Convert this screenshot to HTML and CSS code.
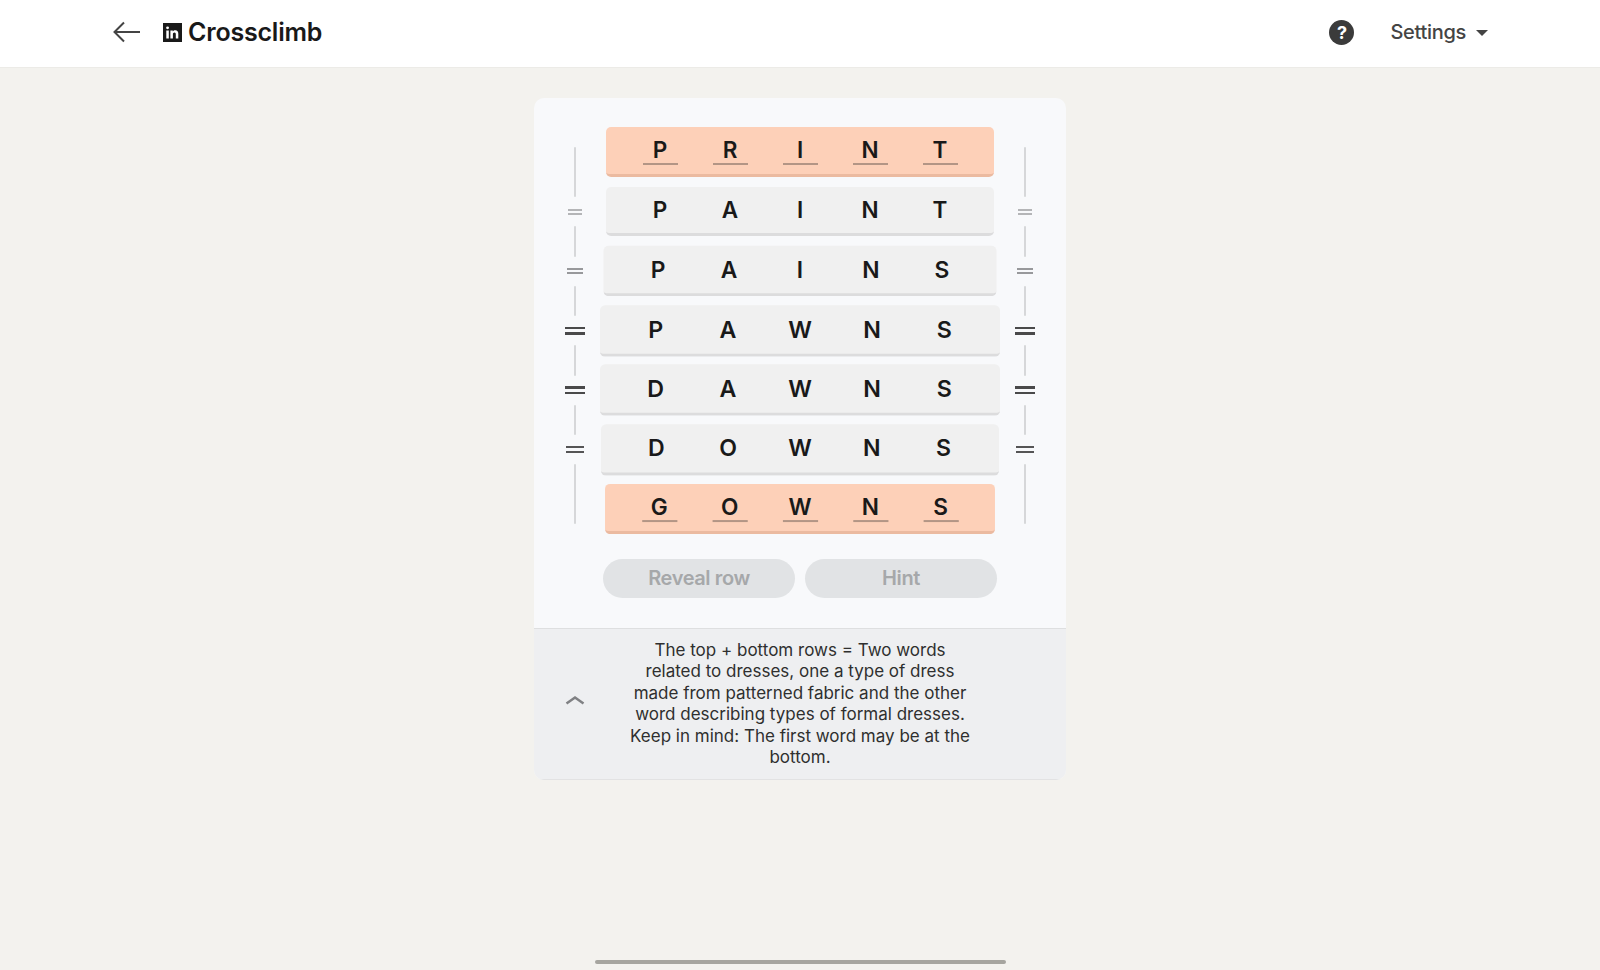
FILE: index.html
```html
<!DOCTYPE HTML>
<html>

<head>
    <title>Crossclimb</title>
    <meta name="viewport" content="width=device-width, initial-scale=1">
    <link rel="stylesheet" href="styles.css">
</head>

<body>
    <header class="topbar">
        <div class="topbar-left">
            <svg class="back-icon" viewBox="0 0 28 24" width="28" height="24" aria-hidden="true">
                <path d="M27 12H2M11 2.500L1.500 12l9.500 9.500" />
            </svg>
            <svg class="logo" viewBox="0 0 19 19" width="19" height="19" aria-hidden="true">
                <rect width="19" height="19" fill="#191919" />
                <path fill="#fff" d="M3.300 7.400h2.500V15.500H3.300zM4.550 3.400a1.450 1.450 0 1 1 0 2.900a1.450 1.450 0 0 1 0-2.900zM7.400 7.400h2.400v1.100c.5-.8 1.300-1.300 2.500-1.300 2.100 0 3 1.300 3 3.500v4.800h-2.500v-4.300c0-1.100-.4-1.800-1.300-1.800-1 0-1.600.7-1.600 1.900v4.200H7.400z" />
            </svg>
            <h1 class="title">Crossclimb</h1>
        </div>
        <div class="topbar-right">
            <span class="help">?</span>
            <span class="settings">Settings</span>
            <span class="caret"></span>
        </div>
    </header>

    <main class="card">
        <section class="game">
            <div class="puzzle">
                <div class="rail">
                    <div class="line line-first"></div>
                    <div class="eq eq-faint"><i></i><i></i></div>
                    <div class="line"></div>
                    <div class="eq eq-mid"><i></i><i></i></div>
                    <div class="line"></div>
                    <div class="eq eq-strong"><i></i><i></i></div>
                    <div class="line"></div>
                    <div class="eq eq-strong"><i></i><i></i></div>
                    <div class="line"></div>
                    <div class="eq eq-dark"><i></i><i></i></div>
                    <div class="line line-last"></div>
                </div>

                <div class="board">
                    <div class="row row-end">
                        <span class="cell"><b>P</b></span><span class="cell"><b>R</b></span><span class="cell"><b>I</b></span><span class="cell"><b>N</b></span><span class="cell"><b>T</b></span>
                    </div>
                    <div class="row">
                        <span class="cell">P</span><span class="cell">A</span><span class="cell">I</span><span class="cell">N</span><span class="cell">T</span>
                    </div>
                    <div class="row lift-1">
                        <span class="cell">P</span><span class="cell">A</span><span class="cell">I</span><span class="cell">N</span><span class="cell">S</span>
                    </div>
                    <div class="row lift-3">
                        <span class="cell">P</span><span class="cell">A</span><span class="cell">W</span><span class="cell">N</span><span class="cell">S</span>
                    </div>
                    <div class="row lift-3">
                        <span class="cell">D</span><span class="cell">A</span><span class="cell">W</span><span class="cell">N</span><span class="cell">S</span>
                    </div>
                    <div class="row lift-2">
                        <span class="cell">D</span><span class="cell">O</span><span class="cell">W</span><span class="cell">N</span><span class="cell">S</span>
                    </div>
                    <div class="row row-end lift-0">
                        <span class="cell"><b>G</b></span><span class="cell"><b>O</b></span><span class="cell"><b>W</b></span><span class="cell"><b>N</b></span><span class="cell"><b>S</b></span>
                    </div>
                </div>

                <div class="rail">
                    <div class="line line-first"></div>
                    <div class="eq eq-faint"><i></i><i></i></div>
                    <div class="line"></div>
                    <div class="eq eq-mid"><i></i><i></i></div>
                    <div class="line"></div>
                    <div class="eq eq-strong"><i></i><i></i></div>
                    <div class="line"></div>
                    <div class="eq eq-strong"><i></i><i></i></div>
                    <div class="line"></div>
                    <div class="eq eq-dark"><i></i><i></i></div>
                    <div class="line line-last"></div>
                </div>
            </div>

            <div class="actions">
                <button class="button" disabled>Reveal row</button>
                <button class="button" disabled>Hint</button>
            </div>
        </section>

        <section class="clue">
            <svg class="chevron" viewBox="0 0 20 10" width="20" height="10" aria-hidden="true">
                <path d="M1.500 8.500L10 2.500l8.500 6" />
            </svg>
            <p class="clue-text">The top + bottom rows = Two words related to dresses, one a type of dress made from patterned fabric and the other word describing types of formal dresses. Keep in mind: The first word may be at the bottom.</p>
        </section>
    </main>

    <div class="home-bar"></div>
</body>

</html>
```

FILE: styles.css
```css
html {
    font-family: Inter, "Liberation Sans", sans-serif;
}

body {
    margin: 0;
    height: 970px;
    background-color: #f3f2ee;
    color: #191919;
    overflow: hidden;
    position: relative;
}

.topbar {
    height: 68px;
    box-sizing: border-box;
    background-color: #fff;
    border-bottom: 1px solid #ecebe7;
    display: flex;
    align-items: center;
    justify-content: space-between;
    padding: 0 112px 3px 113px;
}

.topbar-left,
.topbar-right {
    display: flex;
    align-items: center;
}

.back-icon {
    fill: none;
    stroke: #444;
    stroke-width: 2;
    margin-right: 22px;
}

.title {
    margin: 0 0 0 6px;
    font-size: 25px;
    font-weight: 600;
    letter-spacing: -0.2px;
}

.help {
    width: 25px;
    height: 25px;
    border-radius: 50%;
    background-color: #3b3b3b;
    color: #fff;
    font-size: 18px;
    font-weight: 700;
    line-height: 25px;
    text-align: center;
    margin-right: 36px;
}

.settings {
    font-size: 20px;
    font-weight: 500;
    color: #444;
    letter-spacing: -0.3px;
}

.caret {
    margin-left: 10px;
    border-left: 6px solid transparent;
    border-right: 6px solid transparent;
    border-top: 6px solid #444;
    margin-top: 2px;
}

.card {
    width: 532px;
    margin: 30px auto 0;
    border-radius: 10px;
    overflow: hidden;
    background-color: #f8f9fb;
}

.game {
    padding: 29px 21px 30px;
}

.puzzle {
    display: flex;
    justify-content: space-between;
}

.rail {
    width: 40px;
    padding-top: 20px;
    display: flex;
    flex-direction: column;
    align-items: center;
}

.line {
    width: 2px;
    height: 30.5px;
    background-color: #d6d7d9;
    border-radius: 1px;
}

.line-first {
    height: 50px;
}

.line-last {
    height: 60px;
}

.eq {
    height: 8px;
    margin: 10.5px 0;
    display: flex;
    flex-direction: column;
    justify-content: center;
    gap: 2px;
}

.eq i {
    display: block;
    height: 2px;
}

.eq-faint {
    width: 14px;
}

.eq-faint i {
    background-color: #b4b5b7;
}

.eq-mid {
    width: 16px;
}

.eq-mid i {
    background-color: #98999b;
}

.eq-strong {
    width: 20px;
    gap: 3px;
}

.eq-strong i {
    height: 2.5px;
    background-color: #4a4a4a;
}

.eq-dark {
    width: 18px;
    gap: 3px;
}

.eq-dark i {
    background-color: #555;
}

.board {
    width: 388px;
    display: flex;
    flex-direction: column;
    gap: 10px;
}

.row {
    height: 49.5px;
    box-sizing: border-box;
    padding: 0 19px 1px;
    display: grid;
    grid-template-columns: repeat(5, 70px);
    align-items: center;
    background-color: #f0f0f0;
    border-bottom: 3px solid #dcdcdd;
    border-radius: 5px;
    font-size: 22.5px;
    font-weight: 600;
    text-align: center;
}

.row-end {
    background-color: #fdd0b8;
    border-bottom-color: #ebbaa0;
}

.row-end b {
    display: block;
    width: 35px;
    margin: 0 auto;
    padding-top: 1px;
    font-weight: 600;
    line-height: 27px;
    border-bottom: 2px solid #b39585;
}

.lift-0 {
    transform: scale(1.005);
}

.lift-1 {
    padding-bottom: 0;
    transform: scale(1.013);
}

.lift-2 {
    transform: scale(1.026);
}

.lift-3 {
    padding-bottom: 0;
    transform: scale(1.031);
}

.actions {
    display: flex;
    justify-content: center;
    gap: 10px;
    margin-top: 25px;
}

.button {
    width: 192px;
    height: 39.5px;
    padding: 0 0 1px;
    border: none;
    border-radius: 20px;
    background-color: #e1e3e5;
    color: #a6a8aa;
    font-family: inherit;
    font-size: 20px;
    font-weight: 600;
    letter-spacing: -0.4px;
}

.clue {
    height: 152px;
    box-sizing: border-box;
    border-top: 1px solid #dedfe0;
    border-bottom: 1px solid #e2e2e3;
    background-color: #eeeff1;
    display: flex;
    align-items: center;
    position: relative;
}

.chevron {
    position: absolute;
    left: 31px;
    top: 66px;
    fill: none;
    stroke: #808184;
    stroke-width: 2.500;
}

.clue-text {
    width: 345px;
    margin: 0 auto;
    font-size: 17px;
    line-height: 21.500px;
    color: #2f2f2f;
    text-align: center;
}

.home-bar {
    position: absolute;
    left: 595px;
    top: 960px;
    width: 411px;
    height: 4px;
    border-radius: 2px;
    background-color: #a6a59f;
}
```
